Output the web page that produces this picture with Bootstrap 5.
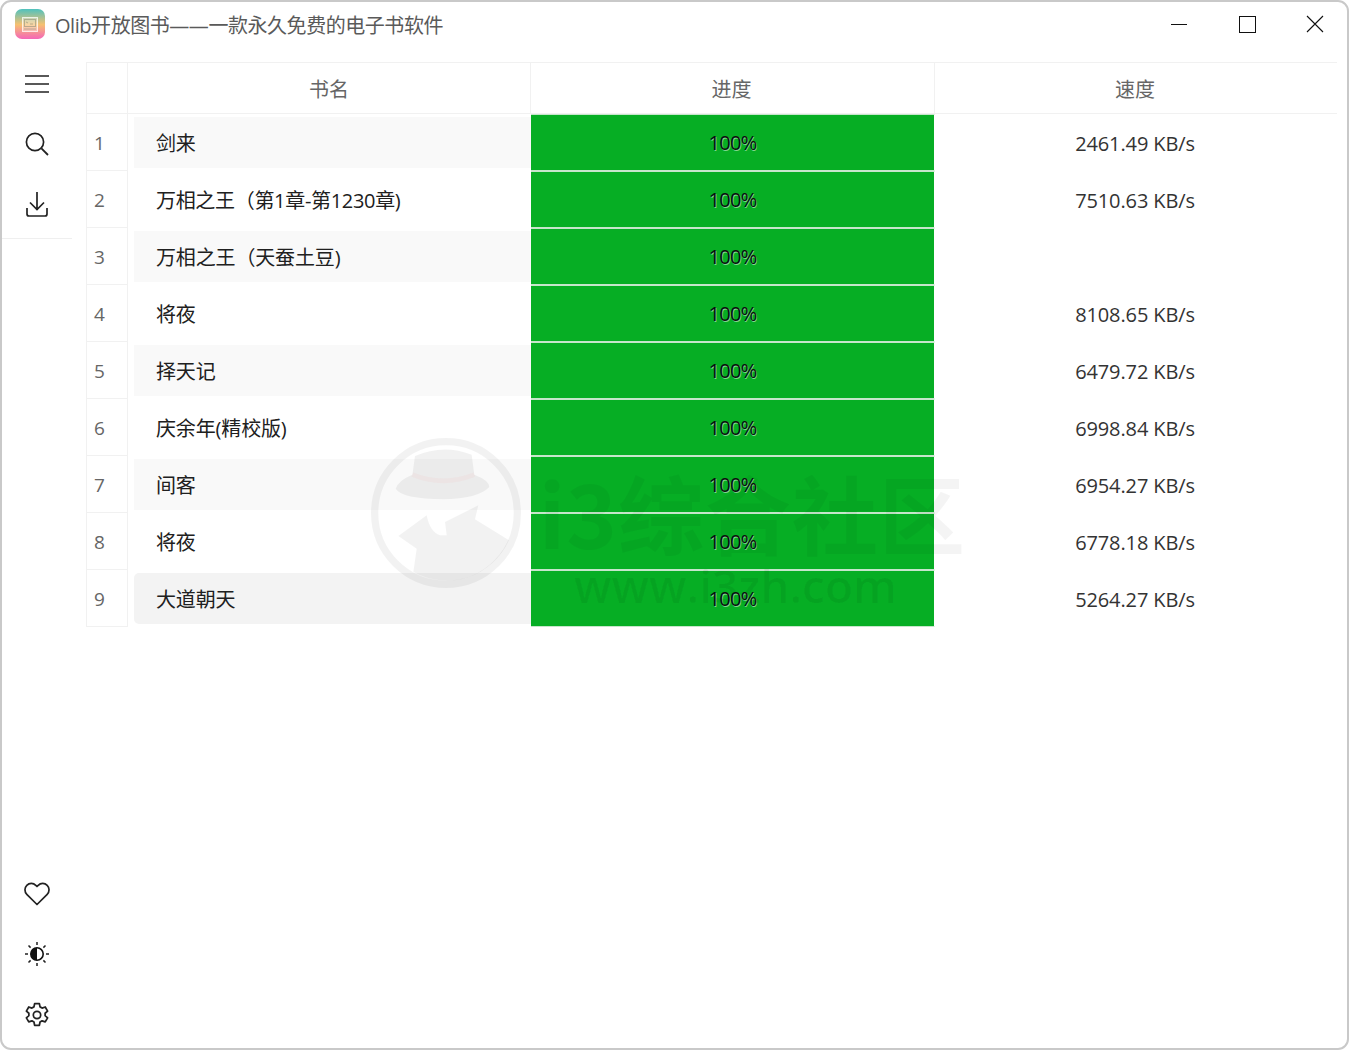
<!DOCTYPE html>
<html lang="zh-CN">
<head>
<meta charset="utf-8">
<title>Olib开放图书</title>
<link href="https://cdn.jsdelivr.net/npm/bootstrap@5.3.0/dist/css/bootstrap.min.css" rel="stylesheet">
<style>
html,body{height:100%;background:#fff;margin:0;overflow:hidden}
body{font-family:"Open Sans","Noto Sans CJK SC",sans-serif;font-size:20px;color:#1a1a1a}
.app-window{width:1349px;height:1050px;border:2px solid #c9c9c9;border-radius:11px;background:#fff;position:relative;overflow:hidden}
.title-bar{height:44px;padding-left:13px}
.app-logo{width:30px;height:30px;border-radius:7px;background:linear-gradient(180deg,#4fc2be 0%,#f6c170 52%,#f565b8 100%);flex:none}
.app-title{margin-left:10px;padding-top:3px;color:#5a5a5a;letter-spacing:-.45px;line-height:1}
.win-group{margin-right:-2px}
.win-btn{width:68px;height:44px;border:0;background:transparent;padding:0;display:flex;align-items:center;justify-content:center}
.side-rail{width:72px;flex:none;padding-top:8px}
.rail-top{border-bottom:1px solid #efefef;padding-bottom:4px;width:70px}
.rail-bottom{padding-bottom:3px}
.rail-btn{width:70px;height:60px;border:0;background:transparent;padding:0;display:flex;align-items:center;justify-content:center}
.rail-bottom .rail-btn{height:60.6px}
.book-table{width:1251px;height:565px;table-layout:fixed;border-collapse:separate;border-spacing:0;margin:16px 0 0 12px}
.book-table th{height:52px;font-weight:400;color:#666;text-align:center;border-top:1px solid #f1f1f1;border-bottom:1px solid #f1f1f1;border-right:1px solid #f1f1f1;padding:3px 0 0}
.book-table th:first-child{border-left:1px solid #f1f1f1}
.book-table th:last-child{border-right:0}
.book-table th.th-nudge{padding-right:2px}
.book-table td{height:57px;padding:0;text-align:center}
.book-table td.num-cell{background:#fff;color:#666;border:1px solid #f1f1f1;border-top:0;font-size:19px;text-align:left;padding:3px 0 0 7px}
.name-cell .name-box{margin:3px 0 3px 6px;height:51px;padding:2px 0 0 22px;display:flex;align-items:center;letter-spacing:-.15px;color:#202020}
.name-cell .name-box.tight-text{letter-spacing:-.32px}
.book-row:nth-child(odd) .name-box{background:#f9f9f9}
.book-row.row-hover .name-box{background:#f3f3f3;border-radius:5px 0 0 5px}
.book-table td.prog-cell{background:#06ae24;border-top:1px solid #c6e6cb;border-bottom:1px solid #c6e6cb;border-right:1px solid #fff;color:#0d0d0d;font-size:20px;letter-spacing:-.75px;text-shadow:.7px .7px 0 rgba(255,255,255,.5)}
.book-table td.speed-cell{color:#333;letter-spacing:-.12px}
.speed-cell span{position:relative;top:1px;left:-1px}
.wm-layer{position:absolute;left:366px;top:434px;width:620px;height:180px;pointer-events:none}
.wm-cn{position:absolute;left:171px;top:26px;font-family:"Noto Sans CJK SC",sans-serif;font-weight:700;font-size:86px;line-height:100px;letter-spacing:1px;color:rgba(0,0,0,.042);white-space:nowrap}
.wm-en{position:absolute;left:206px;top:119px;font-family:"Open Sans",sans-serif;font-weight:600;font-size:46px;line-height:60px;color:rgba(0,0,0,.06);white-space:nowrap}
.wm-logo{position:absolute;left:-3px;top:-4px}
</style>
</head>
<body>
<div class="app-window d-flex flex-column">
  <header class="title-bar d-flex align-items-center">
    <div class="app-logo d-flex align-items-center justify-content-center">
      <svg width="16" height="15" viewBox="0 0 16 15"><rect x=".5" y=".5" width="15" height="14" fill="#fff" fill-opacity=".35" stroke="#fff" stroke-opacity=".75"/><rect x="2.500" y="2.500" width="11" height="7" fill="none" stroke="#8f8f7a" stroke-opacity=".6"/><path d="M4 5l2 1M8 7h3M2 12h12" stroke="#8f8f7a" stroke-opacity=".6"/></svg>
    </div>
    <div class="app-title">Olib开放图书——一款永久免费的电子书软件</div>
    <div class="ms-auto d-flex win-group">
      <button class="win-btn" aria-label="最小化"><svg width="16" height="16" viewBox="0 0 16 16"><path d="M0 8.500h16" stroke="#111" stroke-width="1"/></svg></button>
      <button class="win-btn" aria-label="最大化"><svg width="17" height="17" viewBox="0 0 17 17"><rect x=".5" y=".5" width="16" height="16" fill="none" stroke="#111"/></svg></button>
      <button class="win-btn" aria-label="关闭"><svg width="18" height="18" viewBox="0 0 18 18"><path d="M1 1l16 16M17 1L1 17" stroke="#111" stroke-width="1.100"/></svg></button>
    </div>
  </header>
  <div class="d-flex flex-grow-1">
    <nav class="side-rail d-flex flex-column">
      <div class="rail-top">
        <button class="rail-btn" aria-label="菜单"><svg width="26" height="20" viewBox="0 0 26 20"><path d="M1 2h24M1 10h24M1 18h24" stroke="#222" stroke-width="1.600"/></svg></button>
        <button class="rail-btn" aria-label="搜索"><svg width="26" height="26" viewBox="0 0 26 26"><circle cx="11" cy="11" r="8.600" fill="none" stroke="#222" stroke-width="1.700"/><path d="M17.400 17.400l6.600 6.600" stroke="#222" stroke-width="1.800"/></svg></button>
        <button class="rail-btn" aria-label="下载"><svg width="24" height="26" viewBox="0 0 24 26"><path d="M12 1v17M5 11.500l7 7 7-7M2 17v6a2 2 0 0 0 2 2h16a2 2 0 0 0 2-2v-6" fill="none" stroke="#222" stroke-width="1.700"/></svg></button>
      </div>
      <div class="mt-auto rail-bottom">
        <button class="rail-btn" aria-label="收藏"><svg width="26" height="24" viewBox="0 0 26 24"><path d="M13 22.500L2.800 12.300a6.400 6.400 0 0 1 0-9 6.300 6.300 0 0 1 9 0L13 4.500l1.200-1.200a6.300 6.300 0 0 1 9 0 6.400 6.400 0 0 1 0 9z" fill="none" stroke="#222" stroke-width="1.700" stroke-linejoin="round"/></svg></button>
        <button class="rail-btn" aria-label="主题"><svg width="26" height="26" viewBox="0 0 26 26"><circle cx="13" cy="13" r="6.200" fill="#fff" stroke="#111" stroke-width="1.600"/><path d="M13 6.800a6.200 6.200 0 0 0 0 12.400z" fill="#111"/><path d="M13 1v3M13 22v3M1 13h3M22 13h3M4.500 4.500l2.100 2.100M19.400 19.400l2.100 2.100M4.500 21.500l2.100-2.100M19.400 6.600l2.100-2.100" stroke="#222" stroke-width="1.500"/></svg></button>
        <button class="rail-btn" aria-label="设置"><svg width="26" height="26" viewBox="0 0 24 24"><path d="M9.800 1.500h4.400l.6 3 1.900 1.100 2.900-1 2.200 3.800-2.300 2v2.200l2.300 2-2.200 3.800-2.900-1-1.900 1.100-.6 3H9.800l-.6-3-1.900-1.100-2.900 1-2.200-3.800 2.300-2v-2.200l-2.300-2 2.200-3.800 2.900 1 1.900-1.100z" fill="none" stroke="#222" stroke-width="1.600" stroke-linejoin="round"/><circle cx="12" cy="12" r="3.400" fill="none" stroke="#222" stroke-width="1.600"/></svg></button>
      </div>
    </nav>
    <main class="flex-grow-1">
      <table class="book-table">
        <colgroup><col style="width:42px"><col style="width:403px"><col style="width:404px"><col></colgroup>
        <thead><tr><th></th><th>书名</th><th class="th-nudge">进度</th><th class="th-nudge">速度</th></tr></thead>
        <tbody>
          <tr class="book-row"><td class="num-cell">1</td><td class="name-cell"><div class="name-box">剑来</div></td><td class="prog-cell">100%</td><td class="speed-cell"><span>2461.49 KB/s</span></td></tr>
          <tr class="book-row"><td class="num-cell">2</td><td class="name-cell"><div class="name-box tight-text">万相之王（第1章-第1230章)</div></td><td class="prog-cell">100%</td><td class="speed-cell"><span>7510.63 KB/s</span></td></tr>
          <tr class="book-row"><td class="num-cell">3</td><td class="name-cell"><div class="name-box">万相之王（天蚕土豆)</div></td><td class="prog-cell">100%</td><td class="speed-cell"></td></tr>
          <tr class="book-row"><td class="num-cell">4</td><td class="name-cell"><div class="name-box">将夜</div></td><td class="prog-cell">100%</td><td class="speed-cell"><span>8108.65 KB/s</span></td></tr>
          <tr class="book-row"><td class="num-cell">5</td><td class="name-cell"><div class="name-box">择天记</div></td><td class="prog-cell">100%</td><td class="speed-cell"><span>6479.72 KB/s</span></td></tr>
          <tr class="book-row"><td class="num-cell">6</td><td class="name-cell"><div class="name-box">庆余年(精校版)</div></td><td class="prog-cell">100%</td><td class="speed-cell"><span>6998.84 KB/s</span></td></tr>
          <tr class="book-row"><td class="num-cell">7</td><td class="name-cell"><div class="name-box">间客</div></td><td class="prog-cell">100%</td><td class="speed-cell"><span>6954.27 KB/s</span></td></tr>
          <tr class="book-row"><td class="num-cell">8</td><td class="name-cell"><div class="name-box">将夜</div></td><td class="prog-cell">100%</td><td class="speed-cell"><span>6778.18 KB/s</span></td></tr>
          <tr class="book-row row-hover"><td class="num-cell">9</td><td class="name-cell"><div class="name-box">大道朝天</div></td><td class="prog-cell">100%</td><td class="speed-cell"><span>5264.27 KB/s</span></td></tr>
        </tbody>
      </table>
    </main>
  </div>
  <div class="wm-layer">
    <svg class="wm-logo" width="165" height="162" viewBox="0 0 495 486">
      <circle cx="243" cy="243" r="214" fill="none" stroke="#000" stroke-opacity=".05" stroke-width="22"/>
      <path d="M150 72Q235 35 320 68L328 128Q373 145 373 165 340 200 235 202 110 200 92 170 100 145 142 128Z" fill="#000" fill-opacity=".055"/>
      <path d="M142 128Q235 165 328 128" fill="none" stroke="#ff8a8a" stroke-opacity=".07" stroke-width="14"/>
      <path d="M100 312L185 250Q195 300 225 310L245 310 240 270 340 220 330 262 432 325A205 205 0 0 1 145 420L155 350Z" fill="#000" fill-opacity=".05"/>
    </svg>
    <div class="wm-cn">i3综合社区</div>
    <div class="wm-en">www.i3zh.com</div>
  </div>
</div>
<script src="https://cdn.jsdelivr.net/npm/bootstrap@5.3.0/dist/js/bootstrap.bundle.min.js"></script>
</body>
</html>
